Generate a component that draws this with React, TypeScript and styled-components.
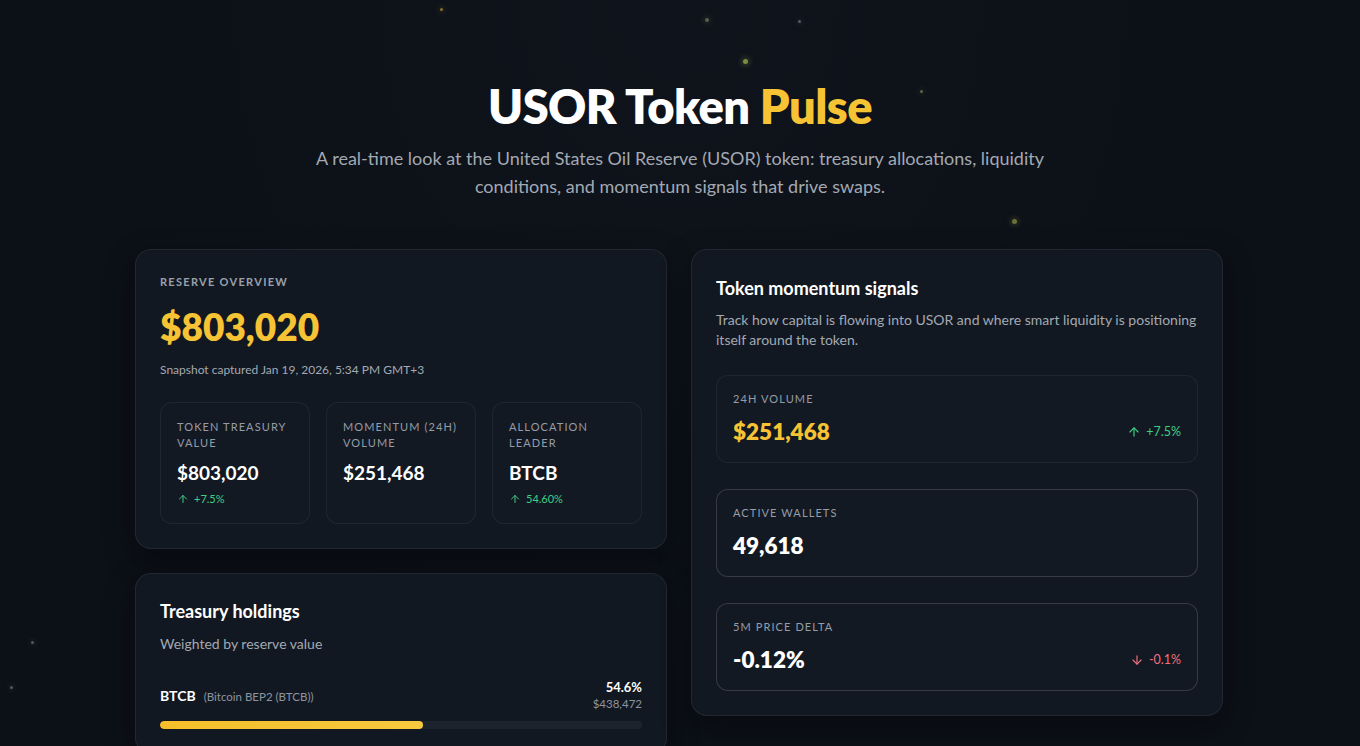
import styled, { createGlobalStyle } from 'styled-components'
import { ArrowDown, ArrowUp } from 'lucide-react'

const GlobalStyle = createGlobalStyle`
  html, body {
    margin: 0;
    padding: 0;
    background: #0c1017;
  }
  body {
    font-family: 'Lato', 'Inter', 'Noto Sans', sans-serif;
    color: #f3f4f6;
    -webkit-font-smoothing: antialiased;
  }
  * { box-sizing: border-box; }
`

const YELLOW = '#f6c334'
const GREEN = '#3ecf86'
const RED = '#f0717e'

const particles = [
  { x: 440, y: 8, s: 3, c: 'rgba(246,195,52,0.55)' },
  { x: 705, y: 18, s: 4, c: 'rgba(160,170,120,0.5)' },
  { x: 798, y: 20, s: 3, c: 'rgba(170,180,200,0.45)' },
  { x: 743, y: 59, s: 5, c: 'rgba(200,220,90,0.6)' },
  { x: 920, y: 90, s: 3, c: 'rgba(180,180,120,0.5)' },
  { x: 1012, y: 219, s: 5, c: 'rgba(200,210,90,0.5)' },
  { x: 31, y: 641, s: 3, c: 'rgba(170,180,190,0.45)' },
  { x: 10, y: 686, s: 3, c: 'rgba(170,180,190,0.45)' },
]

const Page = styled.div`
  position: relative;
  min-height: 746px;
  overflow: hidden;
  padding: 80px 0 40px;
  background: radial-gradient(ellipse at 50% 0%, #0f141c 0%, #0c1017 60%);
`

const Particle = styled.span<{ $size: number; $color: string }>`
  position: absolute;
  width: ${(p) => p.$size}px;
  height: ${(p) => p.$size}px;
  border-radius: 50%;
  background: ${(p) => p.$color};
  box-shadow: 0 0 6px ${(p) => p.$color};
`

const Hero = styled.header`
  display: flex;
  flex-direction: column;
  align-items: center;
  text-align: center;
`

const Title = styled.h1`
  margin: 0;
  font-size: 47px;
  line-height: 53px;
  font-weight: 800;
  letter-spacing: -0.6px;
  color: #ffffff;
`

const Accent = styled.span`
  color: ${YELLOW};
`

const Lead = styled.p`
  margin: 11px 0 0;
  max-width: 760px;
  font-size: 18px;
  line-height: 28px;
  color: #a3a9b3;
`

const Grid = styled.main`
  width: 1088px;
  margin: 49px 0 0 calc(50% - 545px);
  display: grid;
  grid-template-columns: 1fr 1fr;
  gap: 24px;
  align-items: start;
`

const Column = styled.div`
  display: flex;
  flex-direction: column;
  gap: 24px;
`

const Card = styled.section<{ $top?: number }>`
  background: #121821;
  border: 1px solid rgba(255, 255, 255, 0.07);
  border-radius: 16px;
  padding: ${(p) => p.$top ?? 24}px 24px 24px;
  box-shadow: 0 10px 30px rgba(0, 0, 0, 0.35);
`

const Eyebrow = styled.div`
  font-size: 11px;
  line-height: 16px;
  font-weight: 700;
  letter-spacing: 1.3px;
  text-transform: uppercase;
  color: #9aa1ad;
`

const BigValue = styled.div`
  margin-top: 16px;
  font-size: 37px;
  line-height: 42px;
  font-weight: 800;
  color: ${YELLOW};
`

const Caption = styled.div`
  margin-top: 14px;
  font-size: 12px;
  line-height: 16px;
  color: #a3a9b3;
`

const StatGrid = styled.div`
  margin-top: 24px;
  display: grid;
  grid-template-columns: repeat(3, 1fr);
  gap: 16px;
`

const StatBox = styled.div`
  background: #131922;
  border: 1px solid rgba(255, 255, 255, 0.06);
  border-radius: 12px;
  padding: 16px 16px 15px;
  min-height: 121px;
`

const StatLabel = styled.div`
  font-size: 11px;
  line-height: 16px;
  letter-spacing: 1.1px;
  text-transform: uppercase;
  color: #959ca8;
`

const StatValue = styled.div`
  margin-top: 10px;
  font-size: 19px;
  line-height: 24px;
  font-weight: 700;
  color: #ffffff;
`

const Change = styled.div<{ $tone: 'up' | 'down'; $size?: number }>`
  display: inline-flex;
  align-items: center;
  gap: 5px;
  font-size: ${(p) => p.$size ?? 11}px;
  line-height: 16px;
  color: ${(p) => (p.$tone === 'up' ? GREEN : RED)};
`

const SmallChange = styled(Change)`
  margin-top: 6px;
`

const CardTitle = styled.h2`
  margin: 0;
  font-size: 18px;
  line-height: 24px;
  font-weight: 700;
  color: #ffffff;
`

const CardText = styled.p<{ $gap: number }>`
  margin: ${(p) => p.$gap}px 0 0;
  font-size: 14px;
  line-height: 20px;
  color: #a3a9b3;
`

const Holding = styled.div`
  margin-top: 25px;
`

const HoldingHead = styled.div`
  display: flex;
  justify-content: space-between;
  align-items: center;
`

const HoldingName = styled.div`
  display: flex;
  align-items: baseline;
  gap: 8px;
`

const Symbol = styled.span`
  font-size: 14px;
  font-weight: 700;
  color: #ffffff;
`

const FullName = styled.span`
  font-size: 11.5px;
  color: #8d94a0;
`

const HoldingNums = styled.div`
  text-align: right;
`

const Pct = styled.div`
  font-size: 13px;
  line-height: 17px;
  font-weight: 700;
  color: #ffffff;
`

const Usd = styled.div`
  font-size: 11.5px;
  line-height: 16px;
  color: #8d94a0;
`

const Track = styled.div`
  margin-top: 9px;
  height: 8px;
  border-radius: 4px;
  background: #1d232d;
  overflow: hidden;
`

const Fill = styled.div`
  height: 100%;
  border-radius: 4px;
  background: linear-gradient(90deg, #f4bf2a, #f7c93e);
`

const MetricList = styled.div`
  margin-top: 25px;
  display: flex;
  flex-direction: column;
  gap: 26px;
`

const Metric = styled.div<{ $muted?: boolean }>`
  background: #131922;
  border: 1px solid ${(p) => (p.$muted ? 'rgba(255,255,255,0.06)' : 'rgba(255,255,255,0.15)')};
  border-radius: 12px;
  padding: 15px 16px 16px;
`

const MetricRow = styled.div`
  margin-top: 10px;
  display: flex;
  justify-content: space-between;
  align-items: center;
`

const MetricValue = styled.div<{ $accent?: boolean }>`
  font-size: 22.5px;
  line-height: 29px;
  font-weight: 800;
  color: ${(p) => (p.$accent ? YELLOW : '#ffffff')};
`

const stats = [
  { label: 'Token treasury value', value: '$803,020', change: '+7.5%' },
  { label: 'Momentum (24h) volume', value: '$251,468' },
  { label: 'Allocation leader', value: 'BTCB', change: '54.60%' },
]

const metrics = [
  { label: '24h volume', value: '$251,468', accent: true, muted: true, change: '+7.5%', tone: 'up' as const },
  { label: 'Active wallets', value: '49,618' },
  { label: '5m price delta', value: '-0.12%', change: '-0.1%', tone: 'down' as const },
]

export default function App() {
  return (
    <Page>
      <GlobalStyle />
      {particles.map((p, i) => (
        <Particle key={i} $size={p.s} $color={p.c} style={{ left: p.x, top: p.y }} />
      ))}
      <Hero>
        <Title>
          USOR Token <Accent>Pulse</Accent>
        </Title>
        <Lead>
          A real-time look at the United States Oil Reserve (USOR) token: treasury allocations, liquidity
          conditions, and momentum signals that drive swaps.
        </Lead>
      </Hero>

      <Grid>
        <Column>
          <Card>
            <Eyebrow>Reserve overview</Eyebrow>
            <BigValue>$803,020</BigValue>
            <Caption>Snapshot captured Jan 19, 2026, 5:34 PM GMT+3</Caption>
            <StatGrid>
              {stats.map((s) => (
                <StatBox key={s.label}>
                  <StatLabel>{s.label}</StatLabel>
                  <StatValue>{s.value}</StatValue>
                  {s.change && (
                    <SmallChange $tone="up">
                      <ArrowUp size={12} strokeWidth={2} />
                      {s.change}
                    </SmallChange>
                  )}
                </StatBox>
              ))}
            </StatGrid>
          </Card>

          <Card $top={25}>
            <CardTitle>Treasury holdings</CardTitle>
            <CardText $gap={11}>Weighted by reserve value</CardText>
            <Holding>
              <HoldingHead>
                <HoldingName>
                  <Symbol>BTCB</Symbol>
                  <FullName>(Bitcoin BEP2 (BTCB))</FullName>
                </HoldingName>
                <HoldingNums>
                  <Pct>54.6%</Pct>
                  <Usd>$438,472</Usd>
                </HoldingNums>
              </HoldingHead>
              <Track>
                <Fill style={{ width: '54.6%' }} />
              </Track>
            </Holding>
          </Card>
        </Column>

        <Card $top={26}>
          <CardTitle>Token momentum signals</CardTitle>
          <CardText $gap={10}>
            Track how capital is flowing into USOR and where smart liquidity is positioning itself around the
            token.
          </CardText>
          <MetricList>
            {metrics.map((m) => (
              <Metric key={m.label} $muted={m.muted}>
                <StatLabel>{m.label}</StatLabel>
                <MetricRow>
                  <MetricValue $accent={m.accent}>{m.value}</MetricValue>
                  {m.change && (
                    <Change $tone={m.tone!} $size={12.5}>
                      {m.tone === 'up' ? (
                        <ArrowUp size={14} strokeWidth={2} />
                      ) : (
                        <ArrowDown size={14} strokeWidth={2} />
                      )}
                      {m.change}
                    </Change>
                  )}
                </MetricRow>
              </Metric>
            ))}
          </MetricList>
        </Card>
      </Grid>
    </Page>
  )
}
